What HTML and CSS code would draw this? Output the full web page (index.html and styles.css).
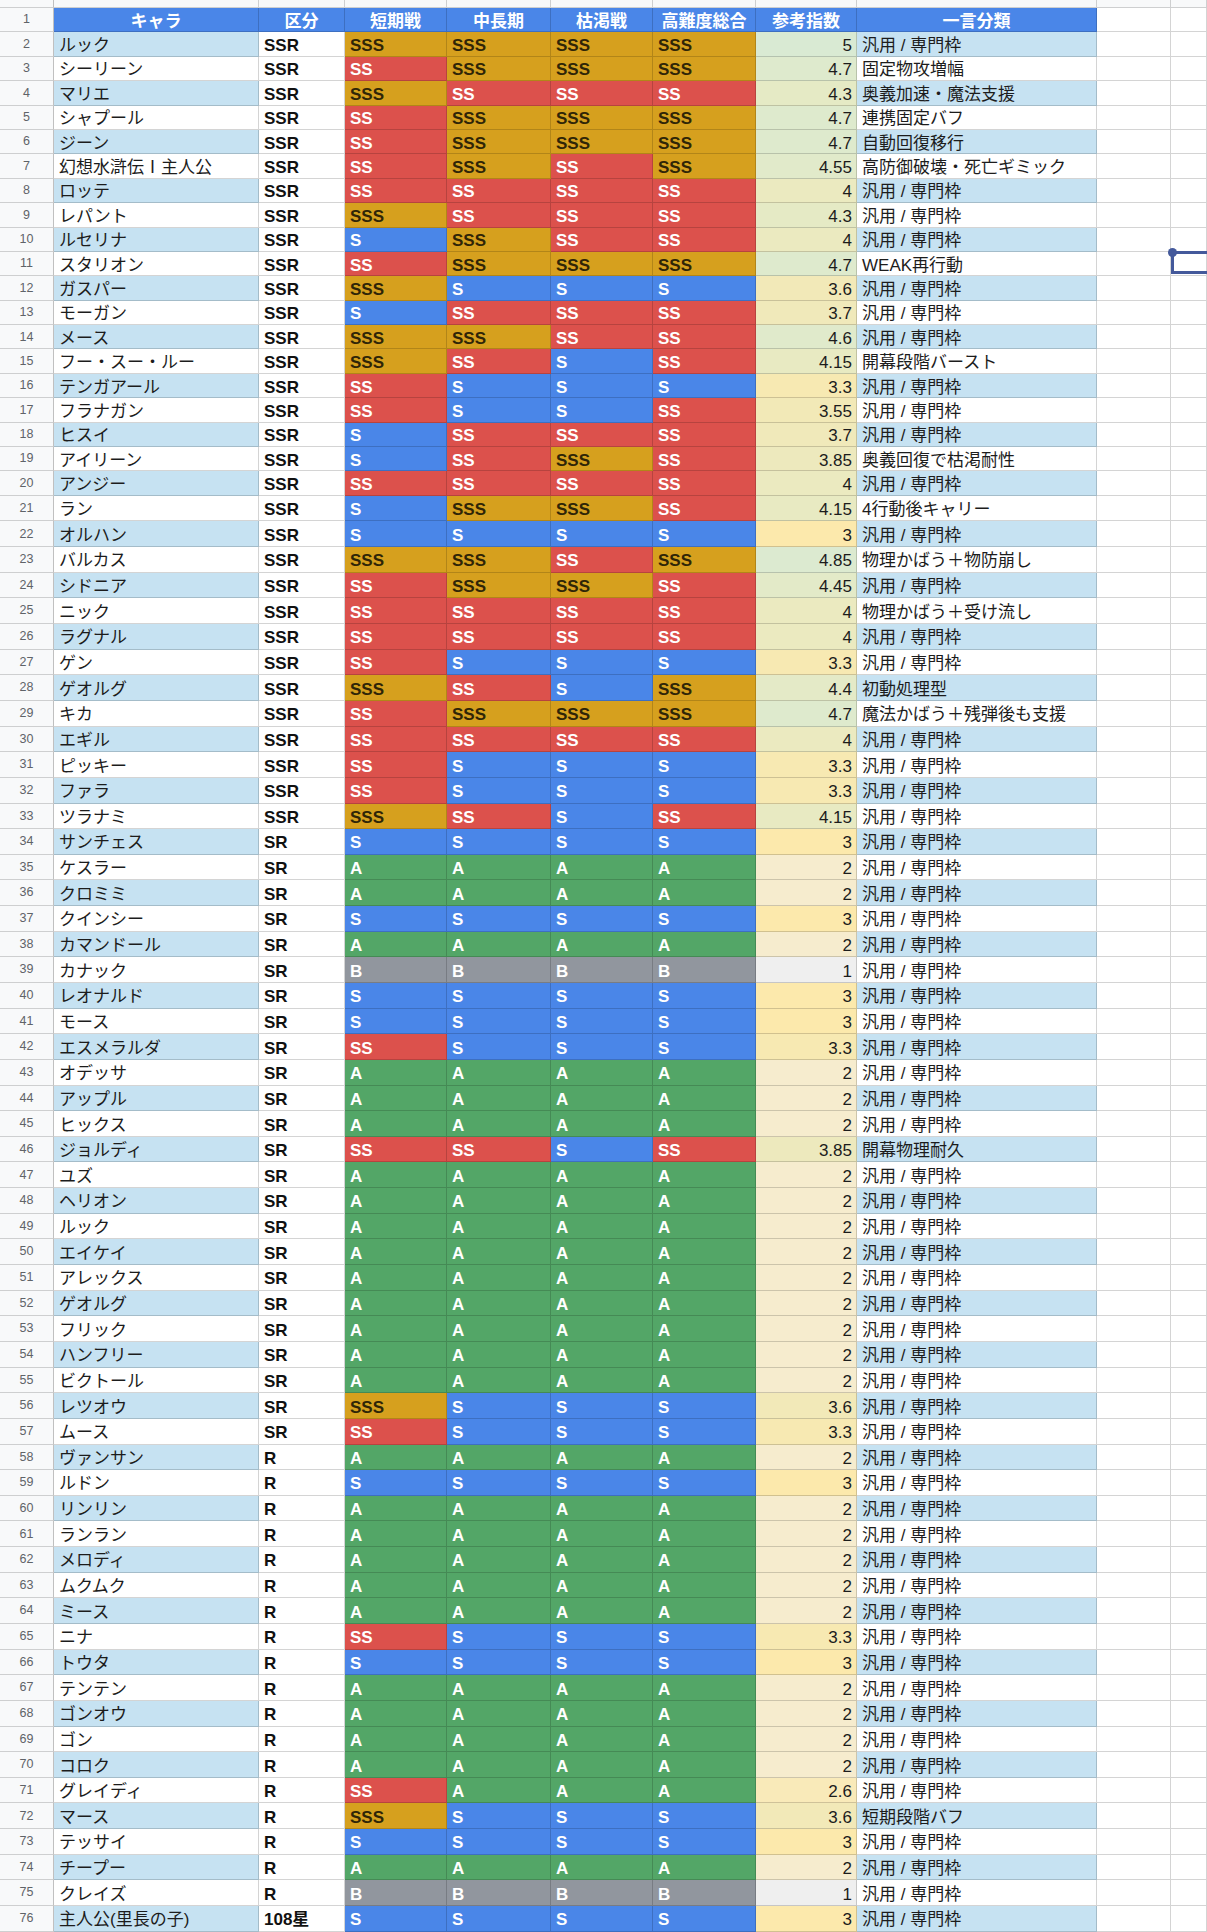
FILE: index.html
```html
<!DOCTYPE html>
<html lang="ja">
<head>
<meta charset="utf-8">
<title>キャラ評価表</title>
<link rel="stylesheet" href="styles.css">
</head>
<body>
<div class="sheet" id="sheet">
  <div class="row colhead">
    <div class="num"></div><div></div><div></div><div></div><div></div><div></div><div></div><div></div><div></div><div></div><div></div>
  </div>
  <div class="row r-a hdr">
    <div class="num">1</div>
    <div class="h">キャラ</div>
    <div class="h">区分</div>
    <div class="h">短期戦</div>
    <div class="h">中長期</div>
    <div class="h">枯渇戦</div>
    <div class="h">高難度総合</div>
    <div class="h">参考指数</div>
    <div class="h">一言分類</div>
    <div></div>
    <div></div>
  </div>
</div>
<script src="script.js"></script>
</body>
</html>
```

FILE: styles.css
```css
* { box-sizing: border-box; }
body {
  margin: 0;
  background: #ffffff;
  font-family: "Liberation Sans", "Noto Sans CJK JP", sans-serif;
  color: #1c1c1c;
}
.sheet {
  width: 1207px;
  overflow: hidden;
}
.row {
  display: grid;
  grid-template-columns: 54px 205px 86px 102px 104px 102px 103px 101px 240px 74px 36px;
}
.colhead { height: 8px; }
.r-a { height: 24.4px; }
.r-b { height: 25.65px; }
.row > div {
  display: flex;
  align-items: center;
  overflow: hidden;
  white-space: nowrap;
  font-size: 17px;
  line-height: 1;
  padding: 3px 5px 0;
  border-right: 1px solid rgba(0, 0, 0, 0.17);
  border-bottom: 1px solid rgba(0, 0, 0, 0.17);
  background: #ffffff;
}
.colhead > div { background: #f8f9fa; padding: 0; }
.row > .num {
  justify-content: center;
  padding: 0;
  font-size: 12.5px;
  color: #5f6368;
  background: #f8f9fa;
  border-right-color: #c0c0c0;
}
.row > .h {
  justify-content: center;
  padding-top: 4px;
  background: #4a86e8;
  color: #ffffff;
  font-weight: bold;
}
.row > .alt { background: #c6e2f2; }
.row > .cls { font-weight: bold; color: #111; }
.row > .rk { font-weight: bold; color: #ffffff; }
.row > .rk-sss { background: #d6a01e; color: #2f2507; }
.row > .rk-ss { background: #dc514c; }
.row > .rk-s { background: #4a86e8; }
.row > .rk-a { background: #53a667; }
.row > .rk-b { background: #91969e; }
.row > .val { justify-content: flex-end; padding-right: 4px; }
.row > .note { padding-left: 5px; }
.row > .selcell { position: relative; overflow: visible; }
.sel {
  position: absolute;
  left: 0;
  top: -1px;
  right: -20px;
  bottom: 1px;
  border: 3px solid #44599b;
  border-right: none;
  pointer-events: none;
}
.sel::before {
  content: "";
  position: absolute;
  left: -6px;
  top: -6px;
  width: 9px;
  height: 9px;
  border-radius: 50%;
  background: #44599b;
}
```

FILE: script.js
```js
(function () {
  var G = "汎用 / 専門枠";
  var data = [
    ["ルック","SSR","SSS","SSS","SSS","SSS",5,G],
    ["シーリーン","SSR","SS","SSS","SSS","SSS",4.7,"固定物攻増幅"],
    ["マリエ","SSR","SSS","SS","SS","SS",4.3,"奥義加速・魔法支援"],
    ["シャプール","SSR","SS","SSS","SSS","SSS",4.7,"連携固定バフ"],
    ["ジーン","SSR","SS","SSS","SSS","SSS",4.7,"自動回復移行"],
    ["幻想水滸伝Ⅰ主人公","SSR","SS","SSS","SS","SSS",4.55,"高防御破壊・死亡ギミック"],
    ["ロッテ","SSR","SS","SS","SS","SS",4,G],
    ["レパント","SSR","SSS","SS","SS","SS",4.3,G],
    ["ルセリナ","SSR","S","SSS","SS","SS",4,G],
    ["スタリオン","SSR","SS","SSS","SSS","SSS",4.7,"WEAK再行動"],
    ["ガスパー","SSR","SSS","S","S","S",3.6,G],
    ["モーガン","SSR","S","SS","SS","SS",3.7,G],
    ["メース","SSR","SSS","SSS","SS","SS",4.6,G],
    ["フー・スー・ルー","SSR","SSS","SS","S","SS",4.15,"開幕段階バースト"],
    ["テンガアール","SSR","SS","S","S","S",3.3,G],
    ["フラナガン","SSR","SS","S","S","SS",3.55,G],
    ["ヒスイ","SSR","S","SS","SS","SS",3.7,G],
    ["アイリーン","SSR","S","SS","SSS","SS",3.85,"奥義回復で枯渇耐性"],
    ["アンジー","SSR","SS","SS","SS","SS",4,G],
    ["ラン","SSR","S","SSS","SSS","SS",4.15,"4行動後キャリー"],
    ["オルハン","SSR","S","S","S","S",3,G],
    ["バルカス","SSR","SSS","SSS","SS","SSS",4.85,"物理かばう＋物防崩し"],
    ["シドニア","SSR","SS","SSS","SSS","SS",4.45,G],
    ["ニック","SSR","SS","SS","SS","SS",4,"物理かばう＋受け流し"],
    ["ラグナル","SSR","SS","SS","SS","SS",4,G],
    ["ゲン","SSR","SS","S","S","S",3.3,G],
    ["ゲオルグ","SSR","SSS","SS","S","SSS",4.4,"初動処理型"],
    ["キカ","SSR","SS","SSS","SSS","SSS",4.7,"魔法かばう＋残弾後も支援"],
    ["エギル","SSR","SS","SS","SS","SS",4,G],
    ["ピッキー","SSR","SS","S","S","S",3.3,G],
    ["ファラ","SSR","SS","S","S","S",3.3,G],
    ["ツラナミ","SSR","SSS","SS","S","SS",4.15,G],
    ["サンチェス","SR","S","S","S","S",3,G],
    ["ケスラー","SR","A","A","A","A",2,G],
    ["クロミミ","SR","A","A","A","A",2,G],
    ["クインシー","SR","S","S","S","S",3,G],
    ["カマンドール","SR","A","A","A","A",2,G],
    ["カナック","SR","B","B","B","B",1,G],
    ["レオナルド","SR","S","S","S","S",3,G],
    ["モース","SR","S","S","S","S",3,G],
    ["エスメラルダ","SR","SS","S","S","S",3.3,G],
    ["オデッサ","SR","A","A","A","A",2,G],
    ["アップル","SR","A","A","A","A",2,G],
    ["ヒックス","SR","A","A","A","A",2,G],
    ["ジョルディ","SR","SS","SS","S","SS",3.85,"開幕物理耐久"],
    ["ユズ","SR","A","A","A","A",2,G],
    ["ヘリオン","SR","A","A","A","A",2,G],
    ["ルック","SR","A","A","A","A",2,G],
    ["エイケイ","SR","A","A","A","A",2,G],
    ["アレックス","SR","A","A","A","A",2,G],
    ["ゲオルグ","SR","A","A","A","A",2,G],
    ["フリック","SR","A","A","A","A",2,G],
    ["ハンフリー","SR","A","A","A","A",2,G],
    ["ビクトール","SR","A","A","A","A",2,G],
    ["レツオウ","SR","SSS","S","S","S",3.6,G],
    ["ムース","SR","SS","S","S","S",3.3,G],
    ["ヴァンサン","R","A","A","A","A",2,G],
    ["ルドン","R","S","S","S","S",3,G],
    ["リンリン","R","A","A","A","A",2,G],
    ["ランラン","R","A","A","A","A",2,G],
    ["メロディ","R","A","A","A","A",2,G],
    ["ムクムク","R","A","A","A","A",2,G],
    ["ミース","R","A","A","A","A",2,G],
    ["ニナ","R","SS","S","S","S",3.3,G],
    ["トウタ","R","S","S","S","S",3,G],
    ["テンテン","R","A","A","A","A",2,G],
    ["ゴンオウ","R","A","A","A","A",2,G],
    ["ゴン","R","A","A","A","A",2,G],
    ["コロク","R","A","A","A","A",2,G],
    ["グレイディ","R","SS","A","A","A",2.6,G],
    ["マース","R","SSS","S","S","S",3.6,"短期段階バフ"],
    ["テッサイ","R","S","S","S","S",3,G],
    ["チープー","R","A","A","A","A",2,G],
    ["クレイズ","R","B","B","B","B",1,G],
    ["主人公(里長の子)","108星","S","S","S","S",3,G]
  ];

  var lo = [239, 239, 239], mid = [252, 233, 172], hi = [217, 234, 211];
  function mix(a, b, t) {
    return "rgb(" + a.map(function (v, i) { return Math.round(v + (b[i] - v) * t); }).join(",") + ")";
  }
  function scale(v) {
    return v <= 3 ? mix(lo, mid, (v - 1) / 2) : mix(mid, hi, (v - 3) / 2);
  }
  function cell(row, cls, text) {
    var d = document.createElement("div");
    if (cls) d.className = cls;
    if (text !== undefined && text !== null) d.textContent = text;
    row.appendChild(d);
    return d;
  }

  var sheet = document.getElementById("sheet");
  data.forEach(function (r, i) {
    var n = i + 2;
    var row = document.createElement("div");
    row.className = "row " + (n <= 20 ? "r-a" : "r-b");
    var alt = n % 2 === 0 ? " alt" : "";
    cell(row, "num", String(n));
    cell(row, "name" + alt, r[0]);
    cell(row, "cls", r[1]);
    for (var k = 2; k <= 5; k++) {
      cell(row, "rk rk-" + r[k].toLowerCase(), r[k]);
    }
    var v = cell(row, "val", String(r[6]));
    v.style.background = scale(r[6]);
    cell(row, "note" + alt, r[7]);
    cell(row, "", null);
    var j = cell(row, n === 11 ? "selcell" : "", null);
    if (n === 11) {
      var s = document.createElement("span");
      s.className = "sel";
      j.appendChild(s);
    }
    sheet.appendChild(row);
  });
})();
```
